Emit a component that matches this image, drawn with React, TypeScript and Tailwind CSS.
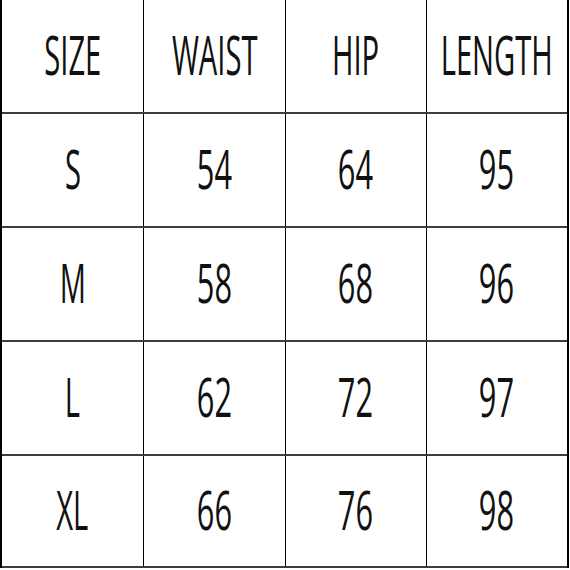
import React from 'react'

const header = ['SIZE', 'WAIST', 'HIP', 'LENGTH']
const rows = [
  ['S', '54', '64', '95'],
  ['M', '58', '68', '96'],
  ['L', '62', '72', '97'],
  ['XL', '66', '76', '98'],
]

function Cell({ text, first }: { text: string; first: boolean }) {
  const isNum = /^\d+$/.test(text)
  return (
    <div
      className={`flex items-center justify-center pb-[5px] ${first ? '' : 'border-l border-black'}`}
    >
      <span
        className={`inline-block text-[55px] font-medium leading-none text-[#111] ${
          isNum ? 'scale-x-[0.56]' : 'scale-x-[0.53]'
        }`}
        style={{ fontFamily: '"Open Sans", "Liberation Sans", sans-serif' }}
      >
        {text}
      </span>
    </div>
  )
}

export default function App() {
  const all = [header, ...rows]
  return (
    <div className="w-[570px] h-[570px] bg-white">
      <div className="w-[569px] border-l-2 border-r-2 border-black">
        {all.map((row, i) => (
          <div
            key={i}
            className={`grid grid-cols-4 border-b-2 border-[#3c3c3c] ${
              i === all.length - 1 ? 'h-[112px]' : 'h-[114px]'
            }`}
          >
            {row.map((t, j) => (
              <Cell key={j} text={t} first={j === 0} />
            ))}
          </div>
        ))}
      </div>
    </div>
  )
}
